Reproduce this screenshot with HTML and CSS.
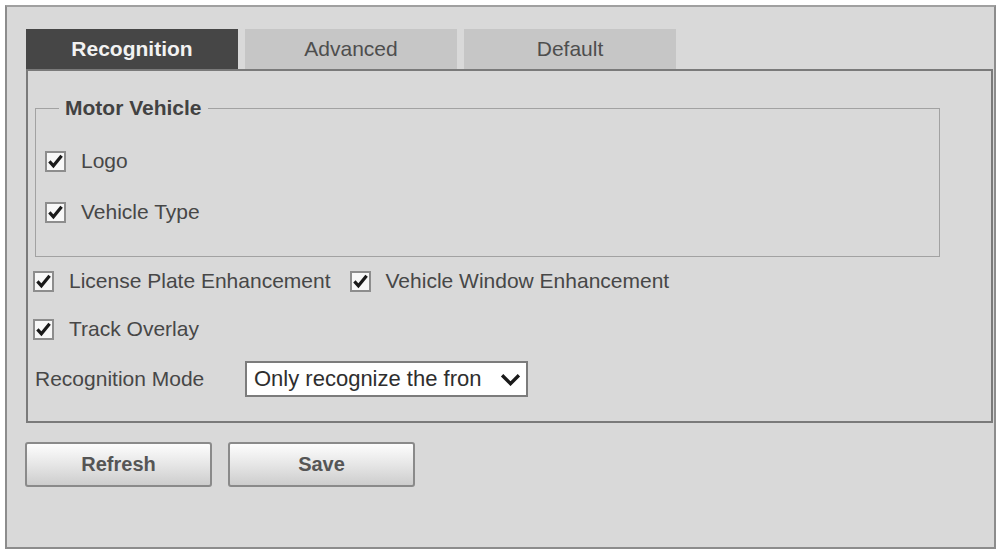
FILE: index.html
```html
<!DOCTYPE html>
<html lang="en">
<head>
  <meta charset="UTF-8" />
  <meta name="viewport" content="width=device-width, initial-scale=1.0"/>
  <title>Recognition</title>
  <link rel="stylesheet" href="styles.css">
</head>
<body>
  <div class="frame">
    <div class="tabs">
      <div class="tab active">Recognition</div>
      <div class="tab">Advanced</div>
      <div class="tab">Default</div>
    </div>

    <div class="panel">
      <fieldset class="group">
        <legend>Motor Vehicle</legend>
        <div class="row">
          <label class="check"><span class="box"><svg viewBox="0 0 17 17"><path d="M2.4 8.4 L6.4 12.8 L14.6 2.8"/></svg></span>Logo</label>
        </div>
        <div class="row">
          <label class="check"><span class="box"><svg viewBox="0 0 17 17"><path d="M2.4 8.4 L6.4 12.8 L14.6 2.8"/></svg></span>Vehicle Type</label>
        </div>
      </fieldset>

      <div class="row line first">
        <label class="check"><span class="box"><svg viewBox="0 0 17 17"><path d="M2.4 8.4 L6.4 12.8 L14.6 2.8"/></svg></span>License Plate Enhancement</label>
        <label class="check"><span class="box"><svg viewBox="0 0 17 17"><path d="M2.4 8.4 L6.4 12.8 L14.6 2.8"/></svg></span>Vehicle Window Enhancement</label>
      </div>
      <div class="row line">
        <label class="check"><span class="box"><svg viewBox="0 0 17 17"><path d="M2.4 8.4 L6.4 12.8 L14.6 2.8"/></svg></span>Track Overlay</label>
      </div>
      <div class="row mode">
        <span class="mode-label">Recognition Mode</span>
        <div class="select">
          <span class="select-text">Only recognize the fron</span>
          <svg class="chevron" viewBox="0 0 20 12"><path d="M2 2 L10 10 L18 2"/></svg>
        </div>
      </div>
    </div>

    <div class="actions">
      <button class="btn">Refresh</button>
      <button class="btn">Save</button>
    </div>
  </div>
</body>
</html>
```

FILE: styles.css
```css
body {
  margin: 0;
  background-color: #fff;
  font-family: "Liberation Sans", Arial, sans-serif;
  font-size: 21px;
  color: #474747;
}
.frame {
  box-sizing: border-box;
  height: 544px;
  margin: 5px 5px 0 5px;
  padding: 22px 1px 0 19px;
  border: 2px solid #8c8c8c;
  border-top-color: #a0a0a0;
  background-color: #d9d9d9;
}
.tabs {
  display: flex;
  gap: 7px;
  height: 40px;
}
.tab {
  width: 212px;
  display: flex;
  align-items: center;
  justify-content: center;
  background-color: #c6c6c6;
  color: #4e4e4e;
}
.tab.active {
  background-color: #464646;
  color: #f2f2f2;
  font-weight: bold;
}
.panel {
  border: 2px solid #7a7a7a;
  padding: 0 0 24px 0;
}
.group {
  box-sizing: border-box;
  width: 905px;
  margin: 25px 0 0 7px;
  padding: 0 9px 29px 9px;
  border: 1px solid #a2a2a2;
  min-width: 0;
}
.group legend {
  margin-left: 14px;
  padding: 0 6px;
  font-weight: bold;
  line-height: 24px;
  color: #424242;
}
.row {
  display: flex;
  align-items: center;
  height: 30px;
  margin-top: 21px;
}
.group .row:first-of-type {
  margin-top: 26px;
}
.line {
  padding-left: 5px;
  margin-top: 18px;
}
.line.first {
  margin-top: 9px;
}
.check {
  display: inline-flex;
  align-items: center;
  margin-right: 19px;
}
.box {
  box-sizing: border-box;
  width: 21px;
  height: 21px;
  margin-right: 15px;
  border: 2px solid #8d8d8d;
  background-color: #f8f8f8;
  display: flex;
}
.box svg {
  width: 17px;
  height: 17px;
}
.box path {
  fill: none;
  stroke: #1a1a1a;
  stroke-width: 3.2;
}
.mode {
  height: 36px;
  margin-top: 17px;
  padding-left: 7px;
}
.mode-label {
  width: 210px;
}
.select {
  box-sizing: border-box;
  width: 283px;
  height: 36px;
  display: flex;
  align-items: center;
  padding: 0 5px 0 7px;
  border: 2px solid #7c7c7c;
  background-color: #fff;
  overflow: hidden;
}
.select-text {
  font-size: 22px;
  color: #2e2e2e;
  white-space: nowrap;
}
.chevron {
  width: 21px;
  height: 13px;
  margin-left: auto;
  flex-shrink: 0;
}
.chevron path {
  fill: none;
  stroke: #1a1a1a;
  stroke-width: 3.2;
}
.actions {
  display: flex;
  gap: 16px;
  margin: 19px 0 0 -1px;
}
.btn {
  width: 187px;
  height: 45px;
  border: 2px solid #8a8a8a;
  border-radius: 3px;
  background: linear-gradient(#fdfdfd, #e6e6e6 50%, #cdcdcd);
  font-family: "Liberation Sans", Arial, sans-serif;
  font-size: 20px;
  font-weight: bold;
  color: #555;
  cursor: pointer;
}
```
